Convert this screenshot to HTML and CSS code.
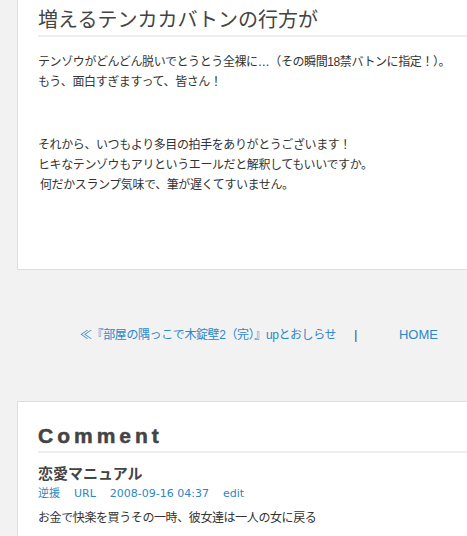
FILE: index.html
```html
<!DOCTYPE html>
<html lang="ja">
<head>
  <meta charset="UTF-8">
  <title>増えるテンカカバトンの行方が</title>
  <link rel="stylesheet" href="styles.css">
</head>
<body>
  <div class="wrap">

    <!-- Entry -->
    <div class="entry">
      <h2 class="entry-title">増えるテンカカバトンの行方が</h2>
      <div class="entry-body">
        <p>テンゾウがどんどん脱いでとうとう全裸に…（その瞬間18禁バトンに指定！）。<br>もう、面白すぎますって、皆さん！</p>
        <p>それから、いつもより多目の拍手をありがとうございます！<br>ヒキなテンゾウもアリというエールだと解釈してもいいですか。<br>&thinsp;何だかスランプ気味で、筆が遅くてすいません。</p>
      </div>
    </div>

    <!-- Pager -->
    <div class="pager">
      <a href="#" class="prev">≪『部屋の隅っこで木錠壁2（完）』upとおしらせ</a>
      <span class="sep">|</span>
      <a href="#" class="home">HOME</a>
    </div>

    <!-- Comments -->
    <div class="comments">
      <h3 class="comments-title">Comment</h3>
      <div class="comment">
        <div class="comment-name">恋愛マニュアル</div>
        <div class="comment-meta">
          <a href="#">逆援</a>
          <a href="#">URL</a>
          <a href="#">2008-09-16 04:37</a>
          <a href="#">edit</a>
        </div>
        <p class="comment-text">お金で快楽を買うその一時、彼女達は一人の女に戻る</p>
      </div>
    </div>

  </div>
</body>
</html>
```

FILE: styles.css
```css
html,
body {
  overflow: hidden;
}

body {
  margin: 0;
  background: #f2f2f2;
  font-family: "Liberation Sans", "Noto Sans CJK JP", sans-serif;
  font-size: 12px;
  color: #333;
}

a {
  color: #2b87c9;
  text-decoration: none;
}

/* the column runs on past the right edge of the window */
.wrap {
  margin-left: 17px;
}

/* Entry */
.entry {
  background: #fff;
  border: 1px solid #dedede;
  border-top: 0;
  border-right: 0;
  padding: 8px 0 74px 20px;
}

.entry-title {
  margin: 0;
  padding-bottom: 3px;
  border-bottom: 2px solid #eee;
  font-size: 20px;
  font-weight: normal;
  line-height: 24px;
  color: #444;
}

.entry-body {
  margin-top: 15px;
  letter-spacing: -0.4px;
}

.entry-body p {
  margin: 0;
  line-height: 20px;
}

.entry-body p + p {
  margin-top: 43px;
}

/* Pager */
.pager {
  display: flex;
  align-items: center;
  margin: 55px 0 56px;
  padding-left: 63px;
  line-height: 20px;
  letter-spacing: -0.4px;
}

.pager .sep {
  margin-left: 18px;
  color: #444;
}

.pager .home {
  margin-left: 42px;
  font-size: 13px;
  letter-spacing: 0;
}

/* Comments */
.comments {
  background: #fff;
  border: 1px solid #dedede;
  border-right: 0;
  padding: 21px 0 20px 20px;
}

.comments-title {
  margin: 0;
  padding-bottom: 2px;
  border-bottom: 2px solid #eee;
  font-size: 21px;
  font-weight: bold;
  line-height: 26px;
  letter-spacing: 4px;
  color: #444;
  -webkit-text-stroke: 0.5px #444;
}

.comment-name {
  margin-top: 11px;
  font-size: 15px;
  font-weight: bold;
  line-height: 20px;
  color: #444;
}

.comment-meta {
  display: flex;
  gap: 14px;
  margin-top: 1px;
  font-family: "DejaVu Sans", "Noto Sans CJK JP", sans-serif;
  font-size: 11px;
  line-height: 18px;
}

.comment-text {
  margin: 5px 0 0;
  line-height: 20px;
  letter-spacing: -0.4px;
}
```
